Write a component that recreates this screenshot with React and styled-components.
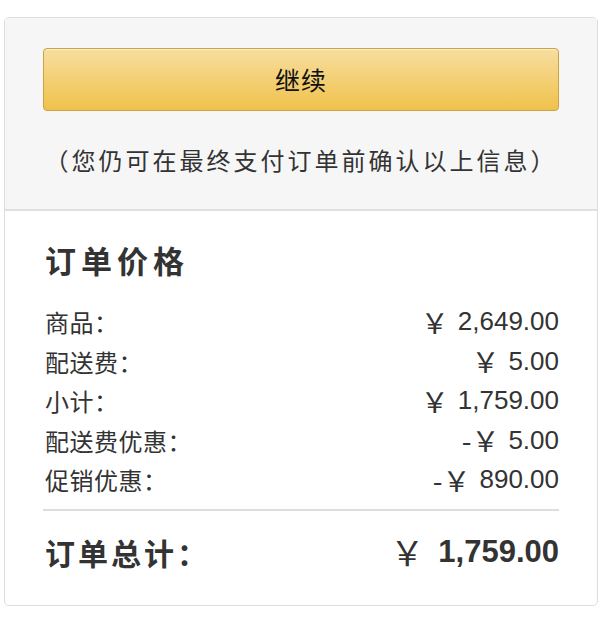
import React from 'react';
import styled, { createGlobalStyle } from 'styled-components';

const GlobalStyle = createGlobalStyle`
    body {
        margin: 0;
        background: #fff;
        font-family: "Noto Sans CJK SC", "Liberation Sans", sans-serif;
        color: #333;
    }
`;

const Card = styled.div`
    margin: 17px 2px 0 4px;
    width: 592px;
    border: 1px solid #ddd;
    border-radius: 5px;
    overflow: hidden;
`;

const Top = styled.div`
    background: #f6f6f6;
    padding: 30px 38px 34px;
    border-bottom: 2px solid #e0e0e0;
`;

const Button = styled.button`
    display: flex;
    align-items: center;
    justify-content: center;
    width: 100%;
    height: 63px;
    padding-bottom: 2px;
    border: 1px solid #c9a440;
    border-radius: 4px;
    background: linear-gradient(to bottom, #f7dea0, #f0c14b);
    box-shadow: inset 0 1px 0 rgba(255, 255, 255, 0.5);
    font-family: "Noto Sans CJK SC", sans-serif;
    font-size: 25px;
    letter-spacing: 1px;
    color: #111;
    cursor: pointer;
`;

const Note = styled.p`
    margin: 34px 0 0;
    text-align: center;
    font-size: 24px;
    line-height: 30px;
    letter-spacing: 3px;
    color: #333;
`;

const Body = styled.div`
    padding: 29px 38px 33px;
`;

const Heading = styled.h2`
    margin: 0 0 22px 2px;
    font-size: 31px;
    line-height: 40px;
    font-weight: 700;
    letter-spacing: 5px;
    color: #333;
`;

const Row = styled.div`
    display: flex;
    justify-content: space-between;
    align-items: center;
    height: 39.5px;
    font-size: 24px;
`;

const Label = styled.span`
    padding-left: 2px;
    letter-spacing: ${(p) => (p.$big ? '3px' : '0.5px')};
`;

const Price = styled.span`
    display: flex;
    align-items: center;
    font-family: "Liberation Sans", Arial, sans-serif;
    font-size: ${(p) => (p.$big ? '31px' : '26px')};
    font-weight: ${(p) => (p.$big ? 700 : 400)};
    color: #333;
`;

const Yen = styled.span`
    font-family: "Noto Sans CJK SC", sans-serif;
    font-weight: 400;
    font-size: ${(p) => (p.$big ? '34px' : '28px')};
    margin-right: ${(p) => (p.$big ? '14px' : '9px')};
`;

const Divider = styled.hr`
    margin: 9px 0 21px;
    border: 0;
    border-top: 2px solid #ddd;
`;

const Total = styled(Row)`
    height: 40px;
    font-size: 30px;
    font-weight: 700;
`;

const rows = [
    ['商品：', '', '2,649.00'],
    ['配送费：', '', '5.00'],
    ['小计：', '', '1,759.00'],
    ['配送费优惠：', '-', '5.00'],
    ['促销优惠：', '-', '890.00'],
];

const App = () => {
    return (
        <>
            <GlobalStyle />
            <Card>
                <Top>
                    <Button>继续</Button>
                    <Note>（您仍可在最终支付订单前确认以上信息）</Note>
                </Top>
                <Body>
                    <Heading>订单价格</Heading>
                    {rows.map(([label, sign, amount]) => (
                        <Row key={label}>
                            <Label>{label}</Label>
                            <Price>
                                <Yen>{sign}￥</Yen>
                                {amount}
                            </Price>
                        </Row>
                    ))}
                    <Divider />
                    <Total>
                        <Label $big>订单总计：</Label>
                        <Price $big>
                            <Yen $big>￥</Yen>
                            1,759.00
                        </Price>
                    </Total>
                </Body>
            </Card>
        </>
    );
};

export default App;
